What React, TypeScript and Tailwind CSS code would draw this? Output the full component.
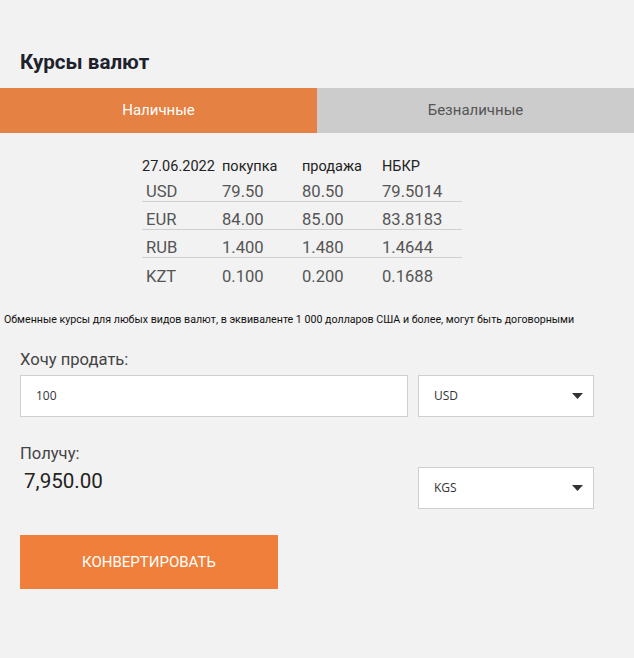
import React from "react";

const rows = [
  ["USD", "79.50", "80.50", "79.5014"],
  ["EUR", "84.00", "85.00", "83.8183"],
  ["RUB", "1.400", "1.480", "1.4644"],
  ["KZT", "0.100", "0.200", "0.1688"],
];

function Select({ value }: { value: string }) {
  return (
    <div className="w-[176px] h-[42px] bg-white border border-[#cfcfcf] flex items-center justify-between pl-[15px] pr-[10px]">
      <span className="text-[12px] text-[#333]" style={{ fontFamily: "'Open Sans', sans-serif" }}>{value}</span>
      <svg width="11" height="6" viewBox="0 0 11 6">
        <path d="M0 0 L11 0 L5.5 6 Z" fill="#333" />
      </svg>
    </div>
  );
}

export default function App() {
  return (
    <div className="w-[634px] h-[658px] bg-[#f2f2f2] text-[#333]" style={{ fontFamily: "Roboto, 'Liberation Sans', sans-serif" }}>
      <div className="pt-[49px] pl-[20px] h-[88px]">
        <h1 className="text-[20.6px] leading-[26px] font-bold text-[#1d222c]">Курсы валют</h1>
      </div>
      <div className="flex h-[45px]">
        <div className="w-[317px] bg-[#e58142] text-white text-[15px] flex items-center justify-center">Наличные</div>
        <div className="flex-1 bg-[#cccccc] text-[#555] text-[15px] flex items-center justify-center">Безналичные</div>
      </div>
      <div className="pt-[27px] pl-[142px]">
        <div className="w-[320px] text-[#555]">
          <div className="flex h-[14px] items-center leading-[14px] text-[14.5px] text-[#222]">
            <div className="w-[80px]">27.06.2022</div>
            <div className="w-[80px]">покупка</div>
            <div className="w-[80px]">продажа</div>
            <div>НБКР</div>
          </div>
          {rows.map((r, i) => (
            <div key={r[0]} className={`flex h-[28px] items-end leading-[19px] text-[16.6px] ${i < 3 ? "border-b border-[#cfcfcf]" : ""}`}>
              <div className="w-[80px] pl-[4px]">{r[0]}</div>
              <div className="w-[80px]">{r[1]}</div>
              <div className="w-[80px]">{r[2]}</div>
              <div>{r[3]}</div>
            </div>
          ))}
        </div>
      </div>
      <div className="pl-[4px] pt-[27px] text-[10.65px] text-[#111] leading-[14px]">
        Обменные курсы для любых видов валют, в эквиваленте 1 000 долларов США и более, могут быть договорными
      </div>
      <div className="px-[20px] pt-[23px]">
        <div className="text-[16.6px] text-[#444] leading-[20px]">Хочу продать:</div>
        <div className="flex gap-[10px] mt-[5px]">
          <div className="w-[388px] h-[42px] bg-white border border-[#cfcfcf] flex items-center pl-[15px]">
            <span className="text-[12px] text-[#333]" style={{ fontFamily: "'Open Sans', sans-serif" }}>100</span>
          </div>
          <Select value="USD" />
        </div>
        <div className="flex mt-[25px]">
          <div className="w-[398px]">
            <div className="text-[16.6px] text-[#444] leading-[20px] mt-[2px]">Получу:</div>
            <div className="text-[20.6px] text-[#222] leading-[26px] pl-[4px] mt-[4px]">7,950.00</div>
          </div>
          <div className="pt-[25px]">
            <Select value="KGS" />
          </div>
        </div>
        <button className="mt-[26px] w-[258px] h-[54px] bg-[#ef7f3a] text-white text-[15px] flex items-center justify-center">
          КОНВЕРТИРОВАТЬ
        </button>
      </div>
    </div>
  );
}
